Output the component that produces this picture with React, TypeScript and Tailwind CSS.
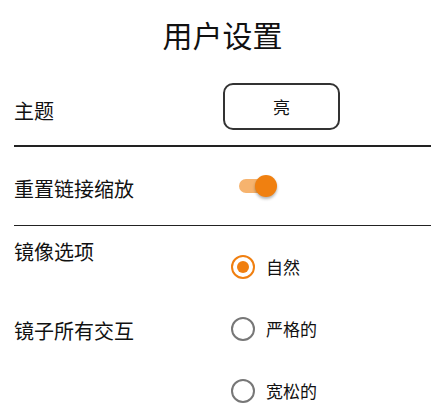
import { useState } from 'react'

const OPTIONS = [
  { value: 'natural', label: '自然' },
  { value: 'strict', label: '严格的' },
  { value: 'loose', label: '宽松的' },
]

function Radio({ checked, label, onClick }: { checked: boolean; label: string; onClick: () => void }) {
  return (
    <button type="button" onClick={onClick} className="flex items-center h-[24px] gap-[11px]">
      <span
        className={`w-[24px] h-[24px] rounded-full border-[2.5px] flex items-center justify-center ${
          checked ? 'border-[#f07f10]' : 'border-[#777]'
        }`}
      >
        {checked && <span className="w-[12px] h-[12px] rounded-full bg-[#f07f10]" />}
      </span>
      <span className="text-[17px] leading-[24px]">{label}</span>
    </button>
  )
}

export default function App() {
  const [resetZoom, setResetZoom] = useState(true)
  const [mirror, setMirror] = useState('natural')

  return (
    <div className="w-[445px] h-[416px] bg-white text-[#111] font-['Noto_Sans_CJK_SC',sans-serif]">
      <h1 className="text-center text-[30px] leading-[36px] pt-[16px]">用户设置</h1>

      {/* 主题 */}
      <div className="flex items-start px-[14px] mt-[31px] h-[47px]">
        <div className="w-[209px] shrink-0 text-[20px] leading-[28px] mt-[14px]">主题</div>
        <button
          type="button"
          className="w-[117px] h-[47px] rounded-[10px] border-2 border-[#333] text-[17px] flex items-center justify-center"
        >
          亮
        </button>
      </div>

      <div className="mx-[14px] mt-[15px] h-[1.5px] bg-[#222]" />

      {/* 重置链接缩放 */}
      <div className="flex items-center px-[14px] h-[78px]">
        <div className="w-[225px] shrink-0 text-[20px] leading-[28px] mt-[6px]">重置链接缩放</div>
        <button
          type="button"
          onClick={() => setResetZoom(!resetZoom)}
          className={`relative w-[34px] h-[14px] rounded-full ${resetZoom ? 'bg-[#f6b36e]' : 'bg-[#ccc]'}`}
        >
          <span
            className={`absolute top-1/2 -translate-y-1/2 w-[22px] h-[22px] rounded-full shadow-[0_2px_3px_rgba(0,0,0,0.3)] ${
              resetZoom ? 'left-[16px] bg-[#f08010]' : 'left-[-4px] bg-[#f1f1f1]'
            }`}
          />
        </button>
      </div>

      <div className="mx-[14px] h-[1.5px] bg-[#222]" />

      {/* 镜像选项 */}
      <div className="flex px-[14px]">
        <div className="w-[217px] shrink-0 flex flex-col text-[20px] leading-[28px]">
          <div className="mt-[12px]">镜像选项</div>
          <div className="mt-[51px]">镜子所有交互</div>
        </div>
        <div className="flex flex-col gap-[38px] mt-[29px]">
          {OPTIONS.map((o) => (
            <Radio key={o.value} checked={mirror === o.value} label={o.label} onClick={() => setMirror(o.value)} />
          ))}
        </div>
      </div>
    </div>
  )
}
